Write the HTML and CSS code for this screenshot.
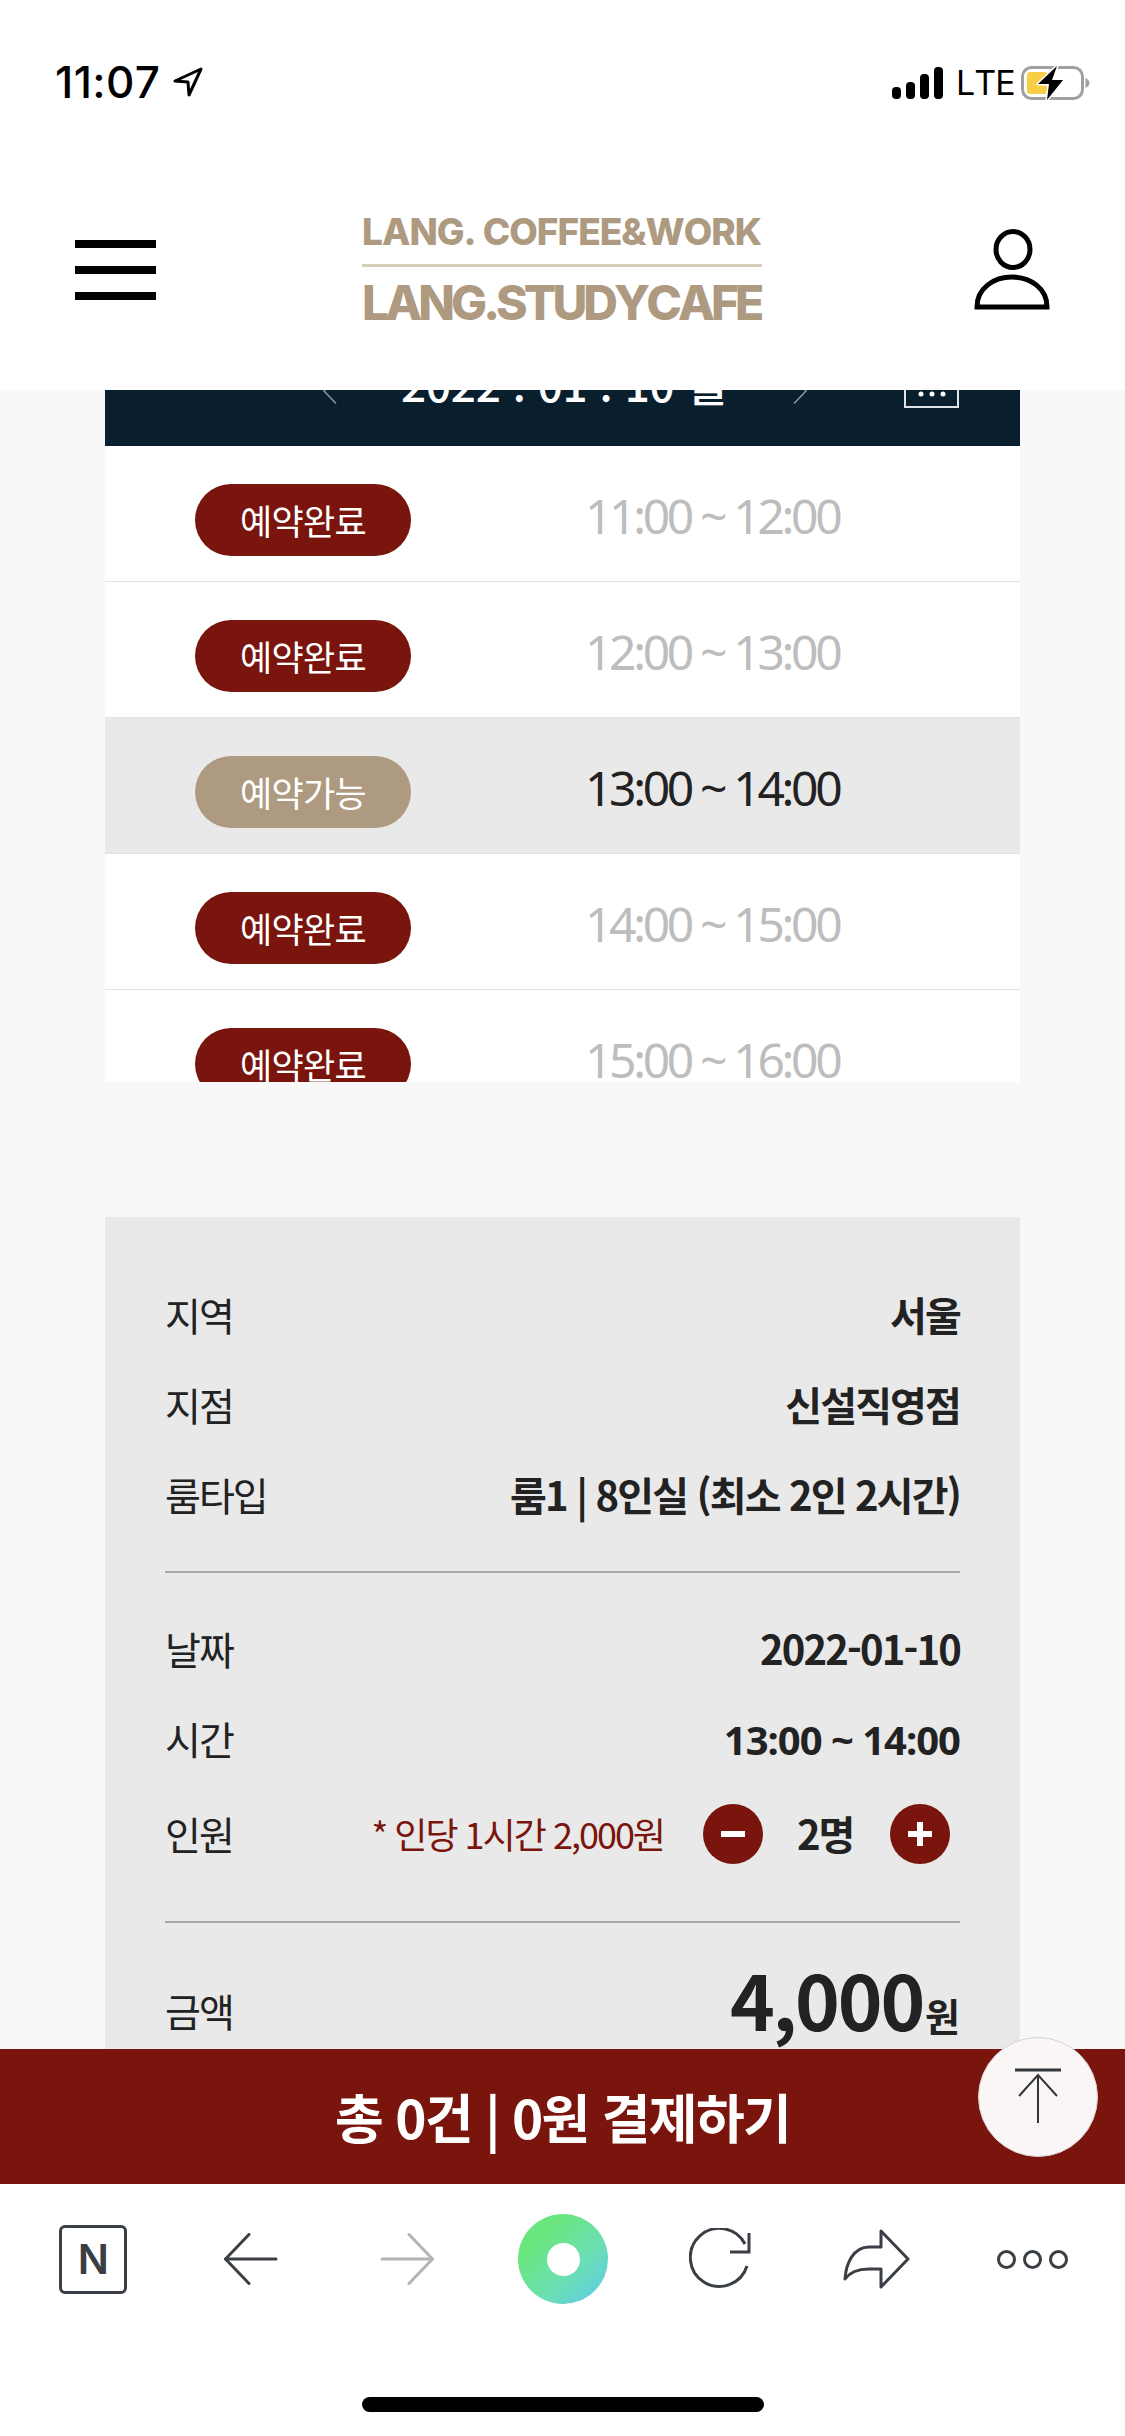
FILE: index.html
```html
<!DOCTYPE html>
<html lang="ko">
<head>
    <meta charset="UTF-8">
    <meta name="viewport" content="width=device-width, initial-scale=1.0">
    <title>LANG.STUDYCAFE 예약</title>
    <link rel="stylesheet" href="styles.css">
</head>
<body>

<div class="status-bar">
    <div class="status-left">
        <span class="clock">11:07</span>
        <svg class="loc-icon" width="30" height="30" viewBox="0 0 30 30"><path d="M28 2 L2 14 L15 15 L16 28 Z" fill="none" stroke="#000" stroke-width="3" stroke-linejoin="round"/></svg>
    </div>
    <div class="status-right">
        <div class="signal"><i class="s1"></i><i class="s2"></i><i class="s3"></i><i class="s4"></i></div>
        <span class="lte">LTE</span>
        <svg class="battery" width="72" height="40" viewBox="0 0 72 40">
            <rect x="3.5" y="4.5" width="60" height="31" rx="9" fill="#fff" stroke="#a0a0a0" stroke-width="3"/>
            <rect x="8" y="9" width="20" height="22" rx="3" fill="#f8ce46"/>
            <path d="M66.5 15 C69 16 70.5 18 70.5 20 C70.5 22 69 24 66.5 25 Z" fill="#a0a0a0"/>
            <path d="M38 3 L19 21 L30 21 L28 37 L44 17 L33 17 Z" fill="#000" stroke="#fff" stroke-width="3" paint-order="stroke" stroke-linejoin="round"/>
        </svg>
    </div>
</div>

<header class="site-header">
    <div class="hamburger"><span></span><span></span><span></span></div>
    <div class="logo">
        <div class="logo-top">LANG. COFFEE&amp;WORK</div>
        <div class="logo-line"></div>
        <div class="logo-bottom">LANG.STUDYCAFE</div>
    </div>
    <svg class="user-icon" width="78" height="82" viewBox="0 0 78 82" fill="none" stroke="#000" stroke-width="5">
        <ellipse cx="39" cy="20.5" rx="17" ry="18"/>
        <path d="M3 78 C3 59 20 48 38 48 C56 48 73 59 73 78 Z"/>
    </svg>
</header>

<main class="content">
    <div class="date-bar">
        <svg class="date-arrow" width="14" height="26" viewBox="0 0 14 26"><path d="M13 0.5 L1 13 L13 25.5" fill="none" stroke="#8d99a3" stroke-width="1.5"/></svg>
        <div class="date-text">2022 . 01 . 10 월</div>
        <svg class="date-arrow date-arrow-next" width="14" height="26" viewBox="0 0 14 26"><path d="M1 0.5 L13 13 L1 25.5" fill="none" stroke="#8d99a3" stroke-width="1.5"/></svg>
        <svg class="date-cal" width="55" height="50" viewBox="0 0 55 50">
            <rect x="1" y="1" width="53" height="48" fill="none" stroke="#dfe3e6" stroke-width="2"/>
            <circle cx="17" cy="36" r="2.5" fill="#fff"/>
            <circle cx="28" cy="36" r="2.5" fill="#fff"/>
            <circle cx="39" cy="36" r="2.5" fill="#fff"/>
        </svg>
    </div>

    <div class="slot-list">
        <div class="slot">
            <span class="pill">예약완료</span>
            <span class="slot-time">11:00 ~ 12:00</span>
        </div>
        <div class="slot">
            <span class="pill">예약완료</span>
            <span class="slot-time">12:00 ~ 13:00</span>
        </div>
        <div class="slot slot-open">
            <span class="pill pill-open">예약가능</span>
            <span class="slot-time">13:00 ~ 14:00</span>
        </div>
        <div class="slot">
            <span class="pill">예약완료</span>
            <span class="slot-time">14:00 ~ 15:00</span>
        </div>
        <div class="slot">
            <span class="pill">예약완료</span>
            <span class="slot-time">15:00 ~ 16:00</span>
        </div>
    </div>

    <section class="summary">
        <div class="sum-group">
            <div class="sum-row"><span class="sum-label">지역</span><span class="sum-value">서울</span></div>
            <div class="sum-row"><span class="sum-label">지점</span><span class="sum-value">신설직영점</span></div>
            <div class="sum-row"><span class="sum-label">룸타입</span><span class="sum-value">룸1 | 8인실 (최소 2인 2시간)</span></div>
        </div>
        <div class="sum-group sum-group-mid">
            <div class="sum-row"><span class="sum-label">날짜</span><span class="sum-value">2022-01-10</span></div>
            <div class="sum-row"><span class="sum-label">시간</span><span class="sum-value sum-time">13:00 ~ 14:00</span></div>
            <div class="sum-row sum-people">
                <span class="sum-label">인원</span>
                <div class="people">
                    <span class="people-note">* 인당 1시간 2,000원</span>
                    <span class="step-btn step-minus"></span>
                    <span class="people-count">2명</span>
                    <span class="step-btn step-plus"></span>
                </div>
            </div>
        </div>
        <div class="sum-row sum-total">
            <span class="sum-label">금액</span>
            <span class="total-price">4,000<small>원</small></span>
        </div>
    </section>
</main>

<div class="pay-bar">총 0건 | 0원 결제하기</div>

<a class="top-btn">
    <svg width="50" height="58" viewBox="0 0 50 58" fill="none" stroke="#33363b"><path d="M2 2 H48" stroke-width="3"/><path d="M25 7 V55" stroke-width="2"/><path d="M6 28 L25 7 L44 28" stroke-width="2"/></svg>
</a>

<nav class="browser-nav">
    <div class="nav-item nav-first"><span class="n-box">N</span></div>
    <div class="nav-item">
        <svg width="54" height="52" viewBox="0 0 54 52" fill="none" stroke="#3a3f45" stroke-width="3" stroke-linecap="round" stroke-linejoin="round"><path d="M25 1.5 L1.5 26 L25 50.5"/><path d="M1.5 26 H52"/></svg>
    </div>
    <div class="nav-item">
        <svg width="54" height="52" viewBox="0 0 54 52" fill="none" stroke="#b4b4b4" stroke-width="3" stroke-linecap="round" stroke-linejoin="round"><path d="M29 1.5 L52.5 26 L29 50.5"/><path d="M52.5 26 H2"/></svg>
    </div>
    <div class="nav-item"><span class="home-dot"></span></div>
    <div class="nav-item">
        <svg width="62" height="62" viewBox="0 0 62 62" fill="none" stroke="#3a3f45" stroke-width="3"><path d="M58 38 A29 29 0 1 1 56 16"/><path d="M60 5 V24 H41"/></svg>
    </div>
    <div class="nav-item">
        <svg width="67" height="60" viewBox="0 0 67 60" fill="none" stroke="#3a3f45" stroke-width="3" stroke-linejoin="round"><path d="M38 2 L65 30 L38 58 V40 H26 C15 40 7 43 2 50 C3 35 10 18 26 18 H38 Z"/></svg>
    </div>
    <div class="nav-item"><div class="more"><i></i><i></i><i></i></div></div>
</nav>

<div class="home-indicator"><span></span></div>

</body>
</html>
```

FILE: styles.css
```css
html, body {
    margin: 0;
    padding: 0;
}
body {
    position: relative;
    width: 1125px;
    height: 2436px;
    overflow: hidden;
    background: #f8f8f8;
    font-family: "Noto Sans CJK KR", "Noto Sans", sans-serif;
    font-kerning: none;
    font-variant-ligatures: none;
    color: #222;
}

/* status bar */
.status-bar {
    height: 150px;
    box-sizing: border-box;
    padding: 56px 34px 0 55px;
    background: #fff;
    display: flex;
    justify-content: space-between;
    align-items: flex-start;
}
.status-left, .status-right {
    display: flex;
    align-items: center;
    height: 52px;
}
.clock {
    font-family: Inter, sans-serif;
    font-size: 44px;
    font-weight: 500;
    color: #000;
    letter-spacing: 0.4px;
    line-height: 52px;
}
.loc-icon {
    margin-left: 13px;
}
.signal {
    display: flex;
    align-items: flex-end;
    gap: 5px;
    height: 32px;
    margin-top: 2px;
}
.signal i {
    display: block;
    width: 9px;
    background: #000;
    border-radius: 4px;
}
.signal .s1 { height: 12px; }
.signal .s2 { height: 17px; }
.signal .s3 { height: 25px; }
.signal .s4 { height: 32px; }
.lte {
    font-family: Inter, sans-serif;
    font-size: 34px;
    color: #000;
    margin: 2px 0 0 13px;
    width: 51px;
    letter-spacing: -1px;
    line-height: 52px;
}
.battery {
    margin-left: 12px;
    margin-top: 1px;
}

/* header */
.site-header {
    height: 240px;
    box-sizing: border-box;
    background: #fff;
    padding: 0 73px 0 75px;
    display: flex;
    align-items: center;
}
.hamburger {
    width: 81px;
    display: flex;
    flex-direction: column;
    gap: 18px;
}
.hamburger span {
    display: block;
    height: 8px;
    background: #000;
}
.logo {
    width: 400px;
    margin-left: 206px;
    color: #ad9a80;
    font-family: Inter, sans-serif;
    font-weight: 800;
    white-space: nowrap;
}
.logo-top {
    font-size: 37px;
    line-height: 35px;
    letter-spacing: -1px;
}
.logo-line {
    height: 3px;
    background: #d8ccbc;
    margin: 15px 0 13px;
}
.logo-bottom {
    font-size: 48px;
    line-height: 46px;
    letter-spacing: -3.95px;
}
.user-icon {
    margin-left: auto;
}

/* date bar, clipped by the header */
.content {
    height: 1659px;
    overflow: hidden;
    padding: 0 105px;
}
.date-bar {
    height: 56px;
    box-sizing: border-box;
    background: #0a1f2e;
    padding: 0 0 38px 218px;
    display: flex;
    align-items: flex-end;
}
.date-arrow {
    flex: none;
    margin-bottom: 4px;
}
.date-arrow-next {
    margin-left: 74px;
}
.date-text {
    flex: none;
    width: 318px;
    margin: 0 0 3px 64px;
    color: #fff;
    font-size: 44px;
    font-weight: 500;
    line-height: 44px;
    white-space: nowrap;
    letter-spacing: -0.2px;
}
.date-cal {
    flex: none;
    margin-left: 97px;
}

/* time slots */
.slot-list {
    height: 636px;
    overflow: hidden;
    background: #fff;
}
.slot {
    height: 136px;
    box-sizing: border-box;
    padding: 12px 0 0 90px;
    display: flex;
    align-items: center;
    border-bottom: 1px solid #e2e2e2;
    color: #bdbdbd;
}
.slot-open {
    background: #e9e9e9;
    color: #222;
}
.pill {
    width: 216px;
    height: 72px;
    border-radius: 36px;
    background: #7a150d;
    color: #fff;
    font-size: 35px;
    line-height: 72px;
    text-align: center;
    letter-spacing: -0.7px;
}
.pill-open {
    background: #ad9a80;
}
.slot-time {
    margin-left: 174px;
    font-family: "Noto Sans", sans-serif;
    font-size: 48px;
    letter-spacing: -3.35px;
    line-height: 60px;
    margin-top: -8px;
}

/* summary box */
.summary {
    margin-top: 135px;
    background: #e9e9e9;
    padding: 55px 60px 0;
    height: 900px;
}
.sum-group {
    padding-bottom: 29px;
    border-bottom: 2px solid #a8a8a8;
}
.sum-group-mid {
    padding-top: 33px;
    padding-bottom: 42px;
    margin-bottom: 42px;
}
.sum-row {
    height: 90px;
    display: flex;
    justify-content: space-between;
    align-items: center;
}
.sum-label {
    font-size: 39px;
    letter-spacing: -2px;
    padding-bottom: 7px;
}
.sum-value {
    font-size: 40px;
    font-weight: 700;
    letter-spacing: -1.85px;
    padding-bottom: 7px;
}
.sum-time {
    font-family: "Noto Sans", sans-serif;
    letter-spacing: -1px;
    padding-bottom: 3px;
}
.sum-people {
    margin-top: 3px;
}
.sum-people .sum-label {
    padding-bottom: 3px;
}
.sum-total .sum-label {
    padding-bottom: 0;
}
.people {
    display: flex;
    align-items: center;
    margin-right: 10px;
}
.people-note {
    color: #7a150d;
    font-size: 36px;
    letter-spacing: -2px;
    margin-right: 39px;
    padding-bottom: 2px;
}
.step-btn {
    position: relative;
    width: 60px;
    height: 60px;
    border-radius: 50%;
    background: #7a150d;
}
.step-minus::before, .step-plus::before, .step-plus::after {
    content: "";
    position: absolute;
    background: #fff;
    left: 18px;
    top: 27px;
    width: 24px;
    height: 6px;
}
.step-plus::after {
    left: 27px;
    top: 18px;
    width: 6px;
    height: 24px;
}
.people-count {
    font-size: 40px;
    font-weight: 700;
    letter-spacing: -2px;
    width: 56px;
    margin: 0 37px 0 34px;
    padding-bottom: 2px;
    white-space: nowrap;
}
.total-price {
    font-size: 76px;
    font-weight: 700;
    letter-spacing: -2.2px;
    line-height: 90px;
    margin-top: -7px;
}
.total-price small {
    font-size: 38px;
    letter-spacing: 0;
    margin-left: 2px;
}

/* payment bar */
.pay-bar {
    height: 135px;
    background: #7a150d;
    color: #fff;
    font-size: 53px;
    font-weight: 700;
    line-height: 135px;
    text-align: center;
    letter-spacing: -1.7px;
}
.top-btn {
    position: absolute;
    left: 978px;
    top: 2037px;
    width: 120px;
    height: 120px;
    box-sizing: border-box;
    border: 1px solid #d5d2d1;
    border-radius: 50%;
    background: #f9f6f5;
    display: flex;
    justify-content: center;
    align-items: center;
}

/* in-app browser toolbar */
.browser-nav {
    height: 150px;
    background: #fff;
    padding: 0 14px 0 16px;
    display: grid;
    grid-template-columns: repeat(7, 1fr);
    align-items: center;
    justify-items: center;
}
.nav-item {
    display: flex;
}
.nav-first {
    margin-right: 2px;
}
.n-box {
    width: 68px;
    height: 69px;
    box-sizing: border-box;
    border: 3px solid #3a3f45;
    border-radius: 6px;
    color: #3a3f45;
    font-family: Inter, sans-serif;
    font-size: 41px;
    font-weight: 600;
    line-height: 63px;
    text-align: center;
}
.home-dot {
    width: 90px;
    height: 90px;
    border-radius: 50%;
    background: linear-gradient(135deg, #6be67e 25%, #6bdfb4 62%, #60cde2 92%);
    display: flex;
    justify-content: center;
    align-items: center;
}
.home-dot::before {
    content: "";
    width: 33px;
    height: 33px;
    border-radius: 50%;
    background: #fff;
}
.more {
    display: flex;
    gap: 7px;
}
.more i {
    display: block;
    width: 19px;
    height: 19px;
    box-sizing: border-box;
    border: 3px solid #3a3f45;
    border-radius: 50%;
}
.home-indicator {
    height: 102px;
    background: #fff;
    display: flex;
    justify-content: center;
}
.home-indicator span {
    width: 402px;
    height: 15px;
    margin-top: 63px;
    border-radius: 8px;
    background: #000;
}
```
